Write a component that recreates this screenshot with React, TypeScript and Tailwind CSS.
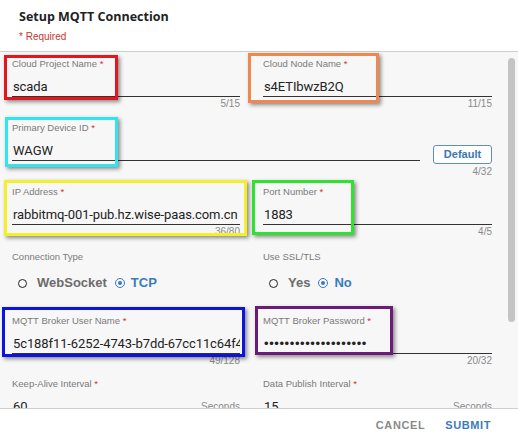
import React from "react";

type FieldProps = {
  label: string;
  value: React.ReactNode;
  counter?: string;
  suffix?: string;
  required?: boolean;
};

function Label({ text, required = true }: { text: string; required?: boolean }) {
  return (
    <div className="h-[14px] text-[9.5px] leading-[14px] text-[#7a7a7a] font-['Liberation_Sans',sans-serif]">
      {text}
      {required && <span className="text-[#d8322b]"> *</span>}
    </div>
  );
}

function Counter({ text, className = "" }: { text: string; className?: string }) {
  return (
    <div
      className={
        "h-[14px] text-right text-[10px] leading-[14px] text-[#8a8a8a] font-['Liberation_Sans',sans-serif] " +
        className
      }
    >
      {text}
    </div>
  );
}

function Field({ label, value, counter, suffix, required = true }: FieldProps) {
  return (
    <div className="flex flex-col">
      <Label text={label} required={required} />
      <div className="flex h-[26px] items-end justify-between overflow-hidden border-b border-[#333]">
        <span className="whitespace-nowrap pl-[1px] text-[13px] leading-[18px] tracking-[-0.1px] text-[#222] font-['Roboto',sans-serif]">
          {value}
        </span>
        {suffix && (
          <span className="text-[10px] leading-[18px] text-[#8a8a8a] font-['Liberation_Sans',sans-serif]">
            {suffix}
          </span>
        )}
      </div>
      {counter && <Counter text={counter} />}
    </div>
  );
}

function Radio({ checked, label }: { checked?: boolean; label: string }) {
  return (
    <span className="flex items-center">
      {checked ? (
        <span className="flex h-[10px] w-[10px] items-center justify-center rounded-full border-[1.5px] border-[#3a7bbd]">
          <span className="h-[4px] w-[4px] rounded-full bg-[#3a7bbd]" />
        </span>
      ) : (
        <span className="h-[9px] w-[9px] rounded-full border-[1.5px] border-[#222]" />
      )}
      <span
        className={
          "text-[13px] font-bold font-['Liberation_Sans',sans-serif] " +
          (checked ? "ml-[6px] text-[#3a7bbd]" : "ml-[10px] text-[#6b6b6b]")
        }
      >
        {label}
      </span>
    </span>
  );
}

function RadioGroup({ label, options, selected }: { label: string; options: string[]; selected: string }) {
  return (
    <div className="flex flex-col">
      <Label text={label} required={false} />
      <div className="mt-[6px] flex h-[26px] items-center gap-[8px] pl-[6px]">
        {options.map((o) => (
          <Radio key={o} label={o} checked={o === selected} />
        ))}
      </div>
    </div>
  );
}

// coloured annotation frames drawn over the form
const marks = [
  "border-[#e3161d] left-[4px] top-[55px] w-[114px] h-[45px]",
  "border-[#f0874f] left-[248px] top-[53px] w-[131px] h-[50px]",
  "border-[#33e4ee] left-[5px] top-[117px] w-[113px] h-[50px]",
  "border-[#f4ef2b] left-[4px] top-[180px] w-[243px] h-[56px]",
  "border-[#2fe22f] left-[252px] top-[180px] w-[102px] h-[55px]",
  "border-[#0c13dc] left-[2px] top-[307px] w-[243px] h-[50px]",
  "border-[#6b1b78] left-[255px] top-[306px] w-[138px] h-[49px]",
];

export default function App() {
  return (
    <div className="relative flex h-[441px] w-[518px] flex-col overflow-hidden bg-white font-['Open_Sans',sans-serif]">
      <header className="h-[51px] px-[19px] pt-[8px]">
        <h1 className="text-[12.5px] font-bold leading-[18px] text-[#222]">Setup MQTT Connection</h1>
        <p className="mt-[4px] text-[10px] leading-[14px] text-[#c9352e] font-['Liberation_Sans',sans-serif]">
          * Required
        </p>
      </header>

      <div className="relative h-[357px] overflow-hidden border-t border-[#cfcfcf] bg-[#f7f7f7] pl-[12px] pr-[26px] pt-[5px]">
        <div className="grid grid-cols-[228px_229px] gap-x-[23px]">
          <div className="h-[64px]">
            <Field label="Cloud Project Name" value="scada" counter="5/15" />
          </div>
          <div className="h-[64px]">
            <Field label="Cloud Node Name" value="s4ETIbwzB2Q" counter="11/15" />
          </div>

          <div className="col-span-2 h-[64px]">
            <div className="flex items-end gap-[13px]">
              <div className="w-[408px]">
                <Label text="Primary Device ID" />
                <div className="flex h-[26px] items-end border-b border-[#333]">
                  <span className="pl-[1px] text-[13px] leading-[18px] text-[#222] font-['Roboto',sans-serif]">WAGW</span>
                </div>
              </div>
              <button className="mb-[-3px] h-[19px] w-[59px] rounded-[3px] border border-[#5b8fc2] bg-white text-[11px] font-bold leading-[17px] text-[#3a76b0] font-['Liberation_Sans',sans-serif]">
                Default
              </button>
            </div>
            <Counter text="4/32" className="mt-[4px]" />
          </div>

          <div className="h-[65px]">
            <Field label="IP Address" value="rabbitmq-001-pub.hz.wise-paas.com.cn" counter="36/80" />
          </div>
          <div className="h-[65px]">
            <Field label="Port Number" value="1883" counter="4/5" />
          </div>

          <div className="h-[64px]">
            <RadioGroup label="Connection Type" options={["WebSocket", "TCP"]} selected="TCP" />
          </div>
          <div className="h-[64px]">
            <RadioGroup label="Use SSL/TLS" options={["Yes", "No"]} selected="No" />
          </div>

          <div className="h-[63px]">
            <Field label="MQTT Broker User Name" value="5c188f11-6252-4743-b7dd-67cc11c64f4" counter="49/128" />
          </div>
          <div className="h-[63px]">
            <Field
              label="MQTT Broker Password"
              value={<span className="tracking-[0.6px] font-['Liberation_Sans',sans-serif]">••••••••••••••••••••</span>}
              counter="20/32"
            />
          </div>

          <div className="h-[64px]">
            <Field label="Keep-Alive Interval" value="60" suffix="Seconds" />
          </div>
          <div className="h-[64px]">
            <Field label="Data Publish Interval" value="15" suffix="Seconds" />
          </div>
        </div>

        <div className="absolute right-[3px] top-[6px] h-[264px] w-[7px] rounded-full bg-[#c4c4c4]" />
      </div>

      <footer className="flex flex-1 items-center justify-end gap-[20px] border-t border-[#cfcfcf] bg-white pr-[27px]">
        <button className="text-[11px] font-bold tracking-[0.6px] text-[#8a8a8a] font-['Liberation_Sans',sans-serif]">
          CANCEL
        </button>
        <button className="text-[11px] font-bold tracking-[0.6px] text-[#3a7bbd] font-['Liberation_Sans',sans-serif]">
          SUBMIT
        </button>
      </footer>

      {marks.map((c, i) => (
        <div
          key={i}
          className={"pointer-events-none absolute border-[3px] shadow-[2px_2px_4px_rgba(0,0,0,0.45)] " + c}
        />
      ))}
    </div>
  );
}
